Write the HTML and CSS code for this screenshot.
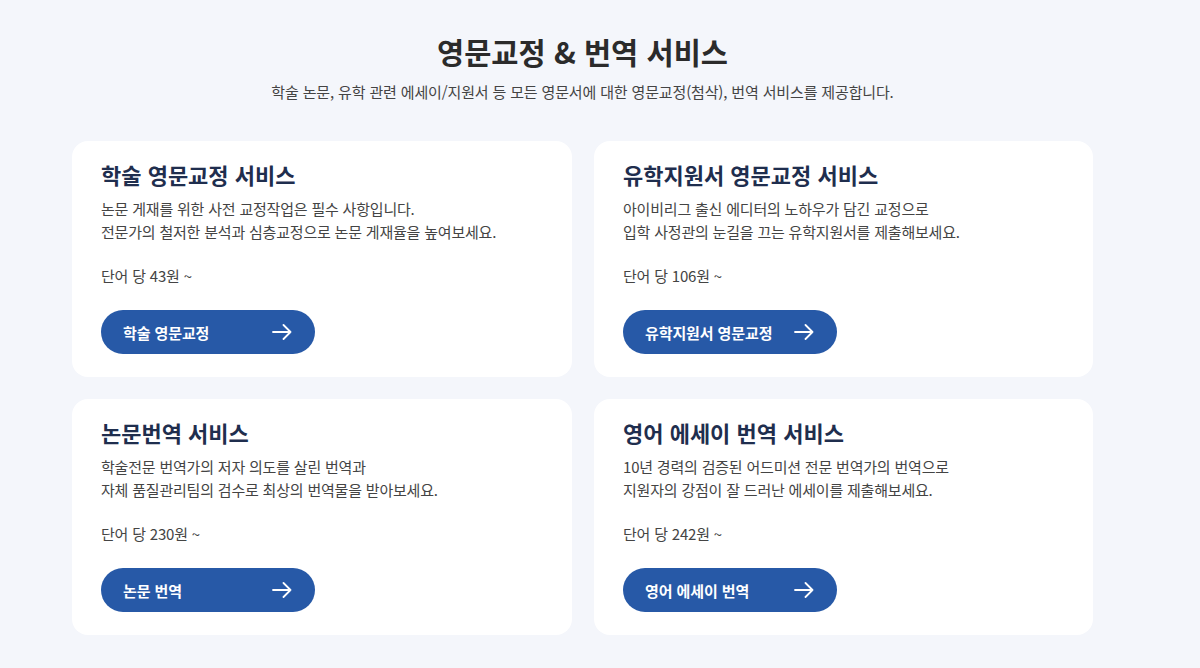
FILE: index.html
```html
<!DOCTYPE html>
<html lang="ko">
<head>
<meta charset="utf-8">
<link rel="stylesheet" href="styles.css">
</head>
<body>
<section class="services">
  <header class="services-head">
    <h1 class="services-title">영문교정 &amp; 번역 서비스</h1>
    <p class="services-sub">학술 논문, 유학 관련 에세이/지원서 등 모든 영문서에 대한 영문교정(첨삭), 번역 서비스를 제공합니다.</p>
  </header>
  <div class="grid">
    <article class="card">
      <h2 class="card-title">학술 영문교정 서비스</h2>
      <p class="card-desc">논문 게재를 위한 사전 교정작업은 필수 사항입니다.<br>전문가의 철저한 분석과 심층교정으로 논문 게재율을 높여보세요.</p>
      <p class="card-price">단어 당 43원 ~</p>
      <a class="card-btn" href="#"><span>학술 영문교정</span><svg class="arrow" width="20" height="16" viewBox="0 0 20 16"><path d="M1 8H18.5M11.5 1L18.5 8L11.5 15" fill="none" stroke="#fff" stroke-width="1.8" stroke-linecap="round" stroke-linejoin="round"/></svg></a>
    </article>
    <article class="card">
      <h2 class="card-title">유학지원서 영문교정 서비스</h2>
      <p class="card-desc">아이비리그 출신 에디터의 노하우가 담긴 교정으로<br>입학 사정관의 눈길을 끄는 유학지원서를 제출해보세요.</p>
      <p class="card-price">단어 당 106원 ~</p>
      <a class="card-btn" href="#"><span>유학지원서 영문교정</span><svg class="arrow" width="20" height="16" viewBox="0 0 20 16"><path d="M1 8H18.5M11.5 1L18.5 8L11.5 15" fill="none" stroke="#fff" stroke-width="1.8" stroke-linecap="round" stroke-linejoin="round"/></svg></a>
    </article>
    <article class="card">
      <h2 class="card-title">논문번역 서비스</h2>
      <p class="card-desc">학술전문 번역가의 저자 의도를 살린 번역과<br>자체 품질관리팀의 검수로 최상의 번역물을 받아보세요.</p>
      <p class="card-price">단어 당 230원 ~</p>
      <a class="card-btn" href="#"><span>논문 번역</span><svg class="arrow" width="20" height="16" viewBox="0 0 20 16"><path d="M1 8H18.5M11.5 1L18.5 8L11.5 15" fill="none" stroke="#fff" stroke-width="1.8" stroke-linecap="round" stroke-linejoin="round"/></svg></a>
    </article>
    <article class="card">
      <h2 class="card-title">영어 에세이 번역 서비스</h2>
      <p class="card-desc">10년 경력의 검증된 어드미션 전문 번역가의 번역으로<br>지원자의 강점이 잘 드러난 에세이를 제출해보세요.</p>
      <p class="card-price">단어 당 242원 ~</p>
      <a class="card-btn" href="#"><span>영어 에세이 번역</span><svg class="arrow" width="20" height="16" viewBox="0 0 20 16"><path d="M1 8H18.5M11.5 1L18.5 8L11.5 15" fill="none" stroke="#fff" stroke-width="1.8" stroke-linecap="round" stroke-linejoin="round"/></svg></a>
    </article>
  </div>
</section>
</body>
</html>
```
FILE: styles.css
```css
* { box-sizing: border-box; }
html, body { margin: 0; padding: 0; }
body {
  background: #f4f6fb;
  font-family: "Noto Sans CJK KR", "Noto Sans", sans-serif;
  color: #333;
  height: 668px;
  overflow: hidden;
}
.services {
  width: 1021px;
  margin-left: 72px;
  padding-top: 33px;
}
.services-head { text-align: center; }
.services-title {
  margin: 0;
  font-size: 29.5px;
  line-height: 36px;
  font-weight: 700;
  color: #2b2b2b;
}
.services-sub {
  margin: 13px 0 0;
  font-size: 15px;
  line-height: 20px;
  color: #444;
  letter-spacing: -0.15px;
}
.grid {
  margin-top: 39px;
  display: grid;
  grid-template-columns: 500px 499px;
  column-gap: 22px;
  row-gap: 22px;
}
.card {
  background: #fff;
  border-radius: 16px;
  padding: 20px 30px 21px 29px;
  height: 236px;
}
.card-title {
  margin: 0 0 10px;
  font-size: 22px;
  line-height: 26px;
  font-weight: 700;
  color: #1f2e4e;
}
.card-desc {
  margin: 0;
  font-size: 15px;
  line-height: 23px;
  color: #444;
  letter-spacing: -0.2px;
}
.card-price {
  margin: 21px 0 0;
  font-size: 15px;
  line-height: 23px;
  color: #444;
  letter-spacing: -0.2px;
}
.card-btn {
  margin-top: 23px;
  width: 214px;
  height: 44px;
  border-radius: 22px;
  background: #2759a7;
  color: #fff;
  text-decoration: none;
  display: flex;
  align-items: center;
  justify-content: space-between;
  padding: 0 23px 0 22px;
  font-size: 15px;
  font-weight: 700;
  letter-spacing: -0.1px;
}
.arrow { display: block; }
```
